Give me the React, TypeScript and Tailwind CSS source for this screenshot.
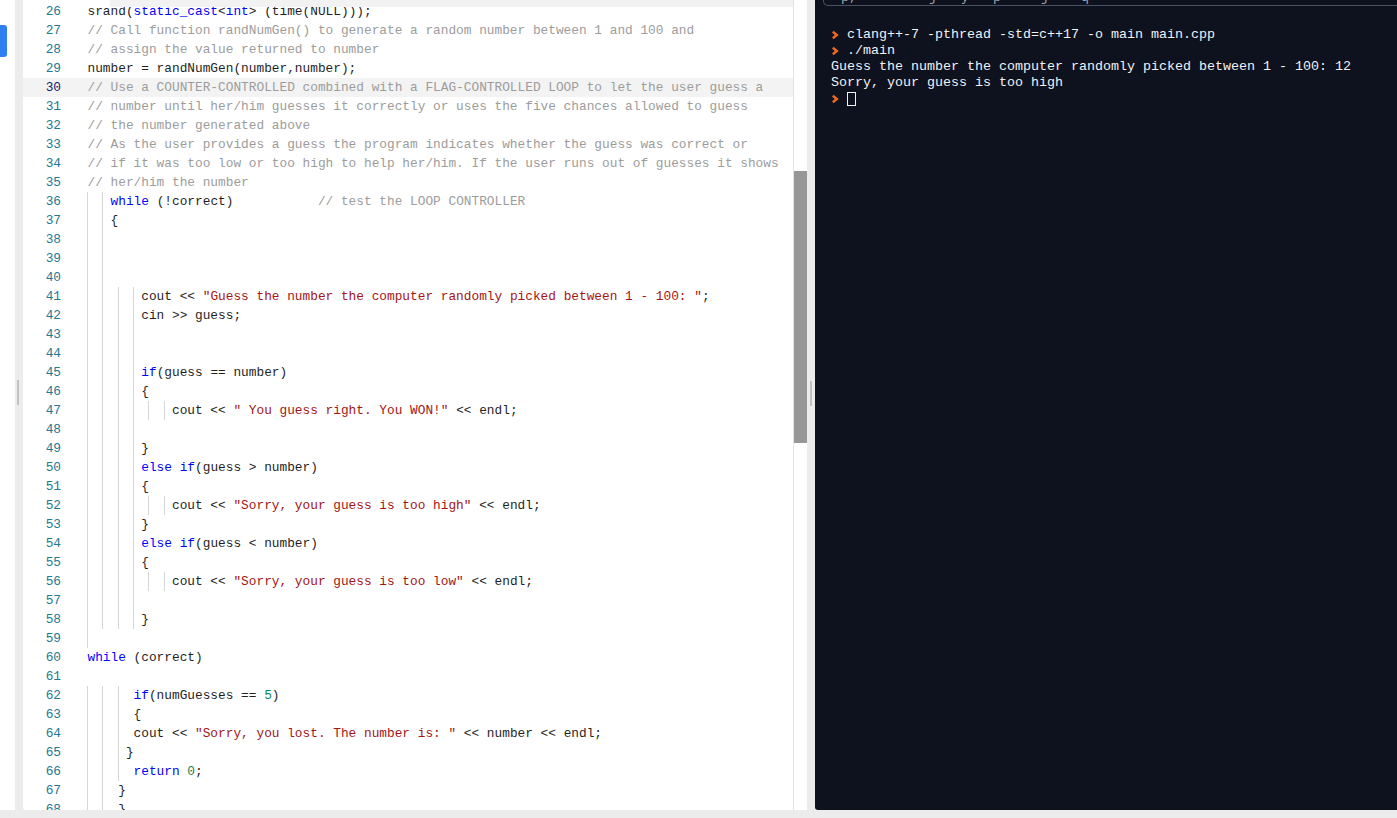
import React from 'react';

type Seg = [string, string?];
interface Line {
  n: number;
  segs: Seg[];
  guides?: number[];
}

const CW = 7.68;

const COLORS: Record<string, string> = {
  k: 'text-[#0000ff]',
  s: 'text-[#a31515]',
  c: 'text-[#9c9c9c]',
  m: 'text-[#098658]',
};

const G2 = [0, 2];
const G4 = [0, 2, 4, 6];
const G6 = [0, 2, 4, 6, 8, 10];

const LINES: Line[] = [
  { n: 26, segs: [['srand('], ['static_cast', 'k'], ['<'], ['int', 'k'], ['> (time(NULL)));']] },
  { n: 27, segs: [['// Call function randNumGen() to generate a random number between 1 and 100 and', 'c']] },
  { n: 28, segs: [['// assign the value returned to number', 'c']] },
  { n: 29, segs: [['number = randNumGen(number,number);']] },
  { n: 30, segs: [['// Use a COUNTER-CONTROLLED combined with a FLAG-CONTROLLED LOOP to let the user guess a', 'c']] },
  { n: 31, segs: [['// number until her/him guesses it correctly or uses the five chances allowed to guess', 'c']] },
  { n: 32, segs: [['// the number generated above', 'c']] },
  { n: 33, segs: [['// As the user provides a guess the program indicates whether the guess was correct or', 'c']] },
  { n: 34, segs: [['// if it was too low or too high to help her/him. If the user runs out of guesses it shows', 'c']] },
  { n: 35, segs: [['// her/him the number', 'c']] },
  { n: 36, segs: [['   '], ['while', 'k'], [' (!correct)           '], ['// test the LOOP CONTROLLER', 'c']], guides: G2 },
  { n: 37, segs: [['   {']], guides: G2 },
  { n: 38, segs: [], guides: G2 },
  { n: 39, segs: [], guides: G2 },
  { n: 40, segs: [], guides: G2 },
  { n: 41, segs: [['       cout << '], ['"Guess the number the computer randomly picked between 1 - 100: "', 's'], [';']], guides: G4 },
  { n: 42, segs: [['       cin >> guess;']], guides: G4 },
  { n: 43, segs: [], guides: G4 },
  { n: 44, segs: [], guides: G4 },
  { n: 45, segs: [['       '], ['if', 'k'], ['(guess == number)']], guides: G4 },
  { n: 46, segs: [['       {']], guides: G4 },
  { n: 47, segs: [['           cout << '], ['" You guess right. You WON!"', 's'], [' << endl;']], guides: G6 },
  { n: 48, segs: [], guides: G4 },
  { n: 49, segs: [['       }']], guides: G4 },
  { n: 50, segs: [['       '], ['else', 'k'], [' '], ['if', 'k'], ['(guess > number)']], guides: G4 },
  { n: 51, segs: [['       {']], guides: G4 },
  { n: 52, segs: [['           cout << '], ['"Sorry, your guess is too high"', 's'], [' << endl;']], guides: G6 },
  { n: 53, segs: [['       }']], guides: G4 },
  { n: 54, segs: [['       '], ['else', 'k'], [' '], ['if', 'k'], ['(guess < number)']], guides: G4 },
  { n: 55, segs: [['       {']], guides: G4 },
  { n: 56, segs: [['           cout << '], ['"Sorry, your guess is too low"', 's'], [' << endl;']], guides: G6 },
  { n: 57, segs: [], guides: G4 },
  { n: 58, segs: [['       }']], guides: G4 },
  { n: 59, segs: [], guides: [0] },
  { n: 60, segs: [['while', 'k'], [' (correct)']] },
  { n: 61, segs: [] },
  { n: 62, segs: [['      '], ['if', 'k'], ['(numGuesses == '], ['5', 'm'], [')']], guides: [0, 2, 4] },
  { n: 63, segs: [['      {']], guides: [0, 2, 4] },
  { n: 64, segs: [['      cout << '], ['"Sorry, you lost. The number is: "', 's'], [' << number << endl;']], guides: [0, 2, 4] },
  { n: 65, segs: [['     }']], guides: [0, 2, 4] },
  { n: 66, segs: [['      '], ['return', 'k'], [' '], ['0', 'm'], [';']], guides: [0, 2, 4] },
  { n: 67, segs: [['    }']], guides: G2 },
  { n: 68, segs: [['    }']], guides: G2 },
];

function Prompt() {
  return (
    <span className="inline-flex w-[16px] h-[16px] items-center align-top">
      <svg width="8" height="16" viewBox="0 0 8 16">
        <path d="M1.8 4.8 L5.8 8 L1.8 11.2" fill="none" stroke="#f26a1f" strokeWidth="2.4" />
      </svg>
    </span>
  );
}

function CodeLine({ line }: { line: Line }) {
  const active = line.n === 30;
  return (
    <div className={`flex h-[19px] leading-[19px] ${active ? 'bg-[#f3f3f3]' : ''}`}>
      <div className={`w-[38px] shrink-0 text-right ${active ? 'text-[#0b216f]' : 'text-[#237893]'}`}>{line.n}</div>
      <div className="relative ml-[26.5px] flex-1 whitespace-pre text-[#1f1f1f]">
        {(line.guides ?? []).map((g) => (
          <span key={g} className="absolute top-0 bottom-0 w-px bg-[#d6d6d6]" style={{ left: g * CW - 0.5 }} />
        ))}
        {line.segs.map(([t, c], i) => (
          <span key={i} className={c ? COLORS[c] : ''}>{t}</span>
        ))}
      </div>
    </div>
  );
}

export default function App() {
  return (
    <div className="flex h-[818px] w-full overflow-hidden bg-[#ececec] font-['Liberation_Mono',monospace]">
      {/* left rail */}
      <div className="h-[810px] w-[15px] shrink-0 bg-white pt-[25px]">
        <div className="h-[32px] w-[7px] rounded-r-[3px] bg-[#2f7ff0]" />
      </div>
      <div className="h-[810px] w-[8px] shrink-0 pt-[380px] pl-[2px]">
        <div className="h-[25px] w-[2px] bg-[#c2c2c2]" />
      </div>

      {/* editor */}
      <div className="flex h-[810px] w-[784px] shrink-0 overflow-hidden rounded-bl-[3px] bg-white text-[12.8px]">
        <div className="relative flex-1 overflow-hidden pt-[2px]">
          {LINES.map((l) => (
            <CodeLine key={l.n} line={l} />
          ))}
          <div className="absolute top-0 right-0 left-[87px] h-[7px] bg-[#f2f2f2]" />
        </div>
        <div className="w-[14px] shrink-0 border-l border-[#e3e3e3] pt-[171px]">
          <div className="h-[272px] w-full bg-[#979797]" />
        </div>
      </div>
      <div className="h-[810px] w-[8px] shrink-0 pt-[381px] pl-[3px]">
        <div className="h-[25px] w-[2px] bg-[#c2c2c2]" />
      </div>

      {/* terminal */}
      <div className="h-[810px] flex-1 overflow-hidden rounded-bl-[3px] bg-[#0e111e] text-[13.33px] leading-[16px] text-[#f2f2f2]">
        <div className="ml-[8px] h-[6px] overflow-hidden rounded-bl-[5px] border-b border-l border-[#4b5161]">
          <div className="-mt-[10px] pl-[17px] whitespace-pre text-[#9aa0ad]">p,         j   y   p     j    q</div>
        </div>
        <div className="mt-[21px] pl-[16px] whitespace-pre">
          <div><Prompt />clang++-7 -pthread -std=c++17 -o main main.cpp</div>
          <div><Prompt />./main</div>
          <div>Guess the number the computer randomly picked between 1 - 100: 12</div>
          <div>Sorry, your guess is too high</div>
          <div className="flex items-center">
            <Prompt />
            <span className="h-[14px] w-[9px] border border-[#f2f2f2]" />
          </div>
        </div>
      </div>
    </div>
  );
}
